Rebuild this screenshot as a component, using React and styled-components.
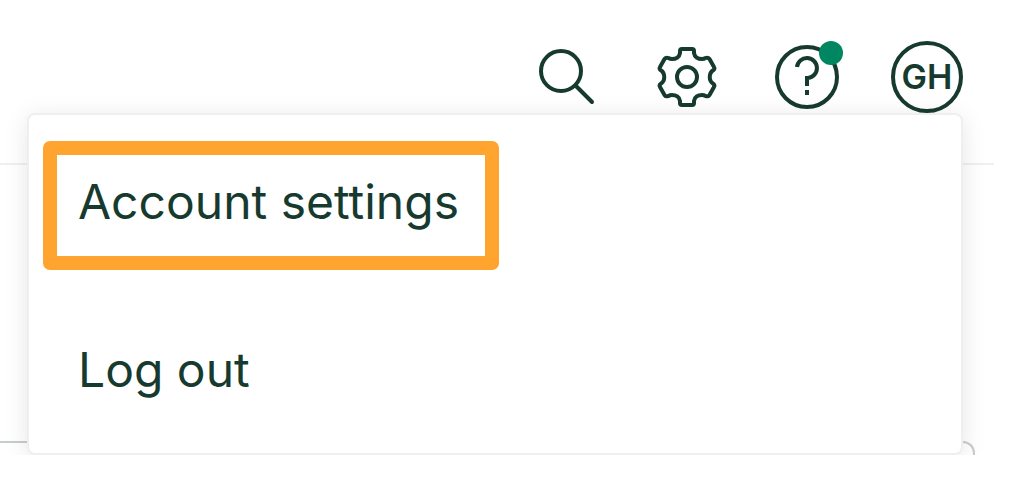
import styled, { createGlobalStyle } from "styled-components";

const GlobalStyle = createGlobalStyle`
  body {
    margin: 0;
    background-color: #ffffff;
    color: #173a2f;
    font-family: Inter, "Liberation Sans", sans-serif;
  }
`;

const Page = styled.div`
  position: relative;
  margin-right: 42px;
  overflow: hidden;
`;

const Header = styled.header`
  display: flex;
  justify-content: flex-end;
  gap: 48px;
  padding: 41px 31px 50px;
  border-bottom: 2px solid #efefef;
`;

const IconButton = styled.button`
  position: relative;
  display: flex;
  align-items: center;
  justify-content: center;
  width: 72px;
  height: 72px;
  padding: 0;
  border: none;
  background: none;
  color: inherit;

  svg {
    fill: none;
    stroke: currentColor;
    stroke-width: 4px;
  }
`;

const NotificationDot = styled.span`
  position: absolute;
  top: 0;
  right: 0;
  width: 24px;
  height: 24px;
  border-radius: 50%;
  background-color: #008661;
`;

const Avatar = styled(IconButton)`
  box-sizing: border-box;
  border: 4px solid;
  border-radius: 50%;
  font-family: inherit;
  font-size: 34px;
  font-weight: 600;
  line-height: 40px;
`;

const Content = styled.main`
  padding: 276px 19px 0 0;
`;

const Card = styled.section`
  height: 12px;
  border-top: 2px solid #c6cecb;
  border-right: 2px solid #c6cecb;
  border-top-right-radius: 12px;
`;

const Menu = styled.nav`
  position: absolute;
  top: 113px;
  left: 27px;
  right: 31px;
  display: flex;
  flex-direction: column;
  align-items: flex-start;
  gap: 39px;
  padding: 26px 14px 15px;
  border: 2px solid #efefef;
  border-radius: 8px;
  background-color: #ffffff;
  background-clip: padding-box;
  box-shadow: 0 4px 24px rgba(0, 0, 0, 0.1);
`;

const MenuLink = styled.a`
  padding: 19px 26px 26px 21px;
  border: 14px solid ${(props) => (props.$highlighted ? "#ffa42e" : "transparent")};
  border-radius: 7px;
  color: inherit;
  font-size: 48px;
  line-height: 56px;
  text-decoration: none;
`;

function SearchIcon() {
  return (
    <svg width="72" height="72" viewBox="0 0 72 72" strokeLinecap="round" aria-hidden="true">
      <circle cx="30" cy="30" r="20" />
      <path d="M45 45L61 61" />
    </svg>
  );
}

function GearIcon() {
  return (
    <svg width="72" height="72" viewBox="-36 -36 72 72" strokeLinejoin="round" aria-hidden="true">
      <path
        d="M-5 -28H5Q7 -28 7 -26V-24C7.5 -20 11 -18 15 -18Q17 -18 18.5 -19Q21 -20 22.5 -18
        L27 -10Q28 -8.5 26.5 -7C21.5 -4 21.5 4 26.5 7Q28 8.5 27 10
        L22.5 18Q21 20 18.5 19Q17 18 15 18C11 18 7.5 20 7 24V26Q7 28 5 28
        H-5Q-7 28 -7 26V24C-7.5 20 -11 18 -15 18Q-17 18 -18.5 19Q-21 20 -22.5 18
        L-27 10Q-28 8.5 -26.5 7C-21.5 4 -21.5 -4 -26.5 -7Q-28 -8.5 -27 -10
        L-22.5 -18Q-21 -20 -18.5 -19Q-17 -18 -15 -18C-11 -18 -7.5 -20 -7 -24V-26Q-7 -28 -5 -28Z"
      />
      <circle r="10" />
    </svg>
  );
}

function HelpIcon() {
  return (
    <svg width="72" height="72" viewBox="0 0 72 72" aria-hidden="true">
      <circle cx="36" cy="36" r="30" />
      <path d="M26 26A10 10 0 1 1 37 37H36V45M36 49V54" />
    </svg>
  );
}

function App() {
  return (
    <>
      <GlobalStyle />
      <Page>
        <Header>
          <IconButton aria-label="Search">
            <SearchIcon />
          </IconButton>
          <IconButton aria-label="Settings">
            <GearIcon />
          </IconButton>
          <IconButton aria-label="Help">
            <HelpIcon />
            <NotificationDot />
          </IconButton>
          <Avatar>GH</Avatar>
        </Header>
        <Content>
          <Card />
        </Content>
        <Menu>
          <MenuLink href="#account" $highlighted>
            Account settings
          </MenuLink>
          <MenuLink href="#logout">Log out</MenuLink>
        </Menu>
      </Page>
    </>
  );
}

export default App;
